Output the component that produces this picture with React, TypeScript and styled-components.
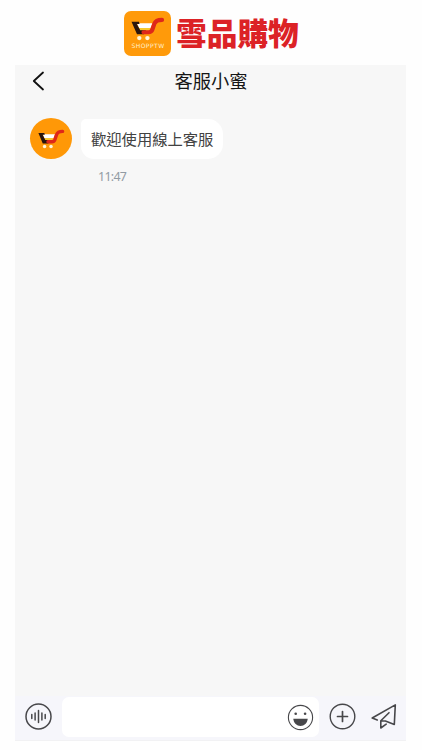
import React from 'react';
import styled, { createGlobalStyle } from 'styled-components';

const GlobalStyle = createGlobalStyle`
  * { box-sizing: border-box; }
  body {
    margin: 0;
    background: #fefefe;
    font-family: "Noto Sans CJK TC", "Noto Sans", sans-serif;
  }
  button { border: 0; padding: 0; background: none; color: inherit; }
  svg { display: block; }
`;

const Page = styled.div`
  display: flex;
  flex-direction: column;
  width: 422px;
  height: 750px;
  padding: 0 16px 9px 15px;
  overflow: hidden;
`;

const Brand = styled.header`
  display: flex;
  align-items: flex-start;
  height: 65px;
  padding: 11px 0 0 109px;
  gap: 5px;
`;

const LogoTile = styled.div`
  display: flex;
  flex-direction: column;
  align-items: center;
  flex: none;
  width: 47px;
  height: 45px;
  padding-top: 6px;
  border-radius: 7px;
  background: #ff9a0a;
`;

const LogoCaption = styled.span`
  margin-top: 2px;
  color: #fff0cf;
  font: 400 6px/6px "DejaVu Sans", sans-serif;
  letter-spacing: 0.48px;
  padding-left: 1px;
`;

const BrandName = styled.h1`
  margin: -1px 0 0;
  color: #dc2226;
  font-size: 30.7px;
  font-weight: 900;
  line-height: 44px;
  white-space: nowrap;
`;

const Chat = styled.main`
  display: flex;
  flex-direction: column;
  flex: 1;
  width: 391px;
  background: #f7f7f7;
`;

const TitleBar = styled.div`
  display: grid;
  grid-template-columns: 46px 1fr 46px;
  align-items: center;
  height: 33px;
  padding-bottom: 2px;
`;

const BackButton = styled.button`
  display: flex;
  padding-left: 17px;
`;

const Title = styled.h2`
  margin: 0;
  padding: 0 0 2px 1px;
  color: #161616;
  font-size: 18.3px;
  font-weight: 400;
  line-height: 28px;
  text-align: center;
`;

const Messages = styled.section`
  flex: 1;
  padding: 20px 15px;
`;

const Message = styled.article`
  display: flex;
  align-items: flex-start;
  gap: 9px;
`;

const Avatar = styled.div`
  display: flex;
  align-items: center;
  justify-content: center;
  width: 42px;
  height: 41px;
  border-radius: 50%;
  background: #ff9807;
`;

const MessageBody = styled.div`
  display: flex;
  flex-direction: column;
`;

const Bubble = styled.p`
  margin: 1px 0 0;
  width: 142px;
  height: 40px;
  padding-left: 10px;
  border-radius: 5px 15px 15px 13px;
  background: #fff;
  color: #424242;
  font-size: 15.3px;
  font-weight: 400;
  line-height: 39px;
  white-space: nowrap;
`;

const Time = styled.time`
  margin: 9px 0 0 17px;
  color: #929ba4;
  font: 400 12.4px/18px "Noto Sans", sans-serif;
  letter-spacing: -0.7px;
`;

const Composer = styled.footer`
  display: flex;
  align-items: center;
  height: 45px;
  padding: 0 8px 3px 10px;
  border-bottom: 1px solid #f1f1f3;
  background: #f6f6fb;
  color: #47474a;
`;

const InputBox = styled.div`
  display: flex;
  align-items: center;
  justify-content: flex-end;
  width: 257px;
  height: 40px;
  margin: 1px 10px 0 10px;
  padding-right: 5px;
  border-radius: 7px;
  background: #fff;
`;

const TextField = styled.input`
  flex: 1;
  min-width: 0;
  height: 100%;
  padding: 0 10px;
  border: 0;
  outline: 0;
  background: transparent;
`;

const IconButton = styled.button<{ $gap?: number }>`
  display: flex;
  flex: none;
  margin-left: ${({ $gap }) => $gap ?? 0}px;
`;

const Cart = ({ width, height }: { width: number; height: number }) => (
  <svg width={width} height={height} viewBox="0 0 34 25" preserveAspectRatio="none">
    <path d="M6 6.5H21.5L19.5 11.5H8Z" fill="#fff" />
    <path d="M8 11.5H19.5L17.5 15.5H9.5Z" fill="#f8c92c" />
    <path d="M.5 5H8L8.5 7.2H5.8L9.2 13.8H15L13 18H6Z" fill="#29150e" />
    <path d="M12.5 15.9H17.5Q20.3 15.9 21.2 13.6L23.4 7Q24.8 3 31 3" fill="none" stroke="#df2719" strokeWidth="4.2" strokeLinecap="round" />
    <circle cx="8.3" cy="22" r="2.2" fill="#fff6dc" />
    <circle cx="16.4" cy="22" r="2.2" fill="#fff6dc" />
  </svg>
);

const iconProps = { fill: 'none', stroke: 'currentColor', strokeLinecap: 'round', strokeLinejoin: 'round' } as const;

const BackIcon = () => (
  <svg width="14" height="20" viewBox="0 0 14 20" {...iconProps} stroke="#111" strokeWidth="1.8">
    <path d="M11 1.5L1.8 10L11 18.5" />
  </svg>
);

const VoiceIcon = () => (
  <svg width="27" height="27" viewBox="0 0 27 27" {...iconProps} strokeWidth="1.5">
    <circle cx="13.5" cy="13.5" r="12.5" />
    <path d="M6.8 11.5V15.5M10.1 10V17M13.5 7.5V19.5M16.9 10V17M20.2 11.5V15.5" />
  </svg>
);

const SmileIcon = () => (
  <svg width="27" height="27" viewBox="0 0 27 27" {...iconProps} strokeWidth="1.1">
    <circle cx="13.5" cy="13.5" r="12.1" />
    <g fill="currentColor" stroke="none">
      <circle cx="8.7" cy="9.7" r="1.3" />
      <circle cx="18.1" cy="9.7" r="1.3" />
      <path d="M6.3 14.7H20.7C20.4 19 17.2 21.9 13.5 21.9S6.6 19 6.3 14.7Z" />
    </g>
  </svg>
);

const PlusIcon = () => (
  <svg width="27" height="27" viewBox="0 0 27 27" {...iconProps} strokeWidth="1.4">
    <circle cx="13.5" cy="13.5" r="12.3" />
    <path d="M13.5 8.5V18.5M8.5 13.5H18.5" strokeWidth="1.7" />
  </svg>
);

const SendIcon = () => (
  <svg width="27" height="27" viewBox="0 0 27 27" {...iconProps} strokeWidth="1.6">
    <path d="M6.3 17L1.2 15L24.3 1.9L23.3 21.5L14.4 18M18 9.7L9.8 17.7V25L15.2 21.2M9.8 17.7L14.4 18" />
  </svg>
);

export default function App() {
  return (
    <>
      <GlobalStyle />
      <Page>
        <Brand>
          <LogoTile>
            <Cart width={34} height={24} />
            <LogoCaption>SHOPPTW</LogoCaption>
          </LogoTile>
          <BrandName>雪品購物</BrandName>
        </Brand>
        <Chat>
          <TitleBar>
            <BackButton aria-label="返回"><BackIcon /></BackButton>
            <Title>客服小蜜</Title>
          </TitleBar>
          <Messages>
            <Message>
              <Avatar><Cart width={27} height={20} /></Avatar>
              <MessageBody>
                <Bubble>歡迎使用線上客服</Bubble>
                <Time>11:47</Time>
              </MessageBody>
            </Message>
          </Messages>
          <Composer>
            <IconButton aria-label="語音"><VoiceIcon /></IconButton>
            <InputBox>
              <TextField aria-label="訊息" />
              <IconButton aria-label="表情"><SmileIcon /></IconButton>
            </InputBox>
            <IconButton aria-label="更多"><PlusIcon /></IconButton>
            <IconButton aria-label="傳送" $gap={15}><SendIcon /></IconButton>
          </Composer>
        </Chat>
      </Page>
    </>
  );
}
